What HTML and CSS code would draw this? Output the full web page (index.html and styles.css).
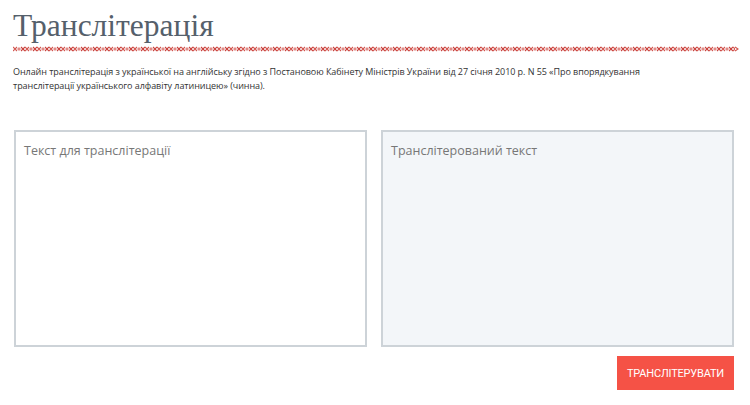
FILE: index.html
```html
<!DOCTYPE html>
<html lang="uk">
<head>
<meta charset="utf-8">
<title>Транслітерація</title>
<link rel="stylesheet" href="styles.css">
</head>
<body>
<main class="page">
  <h1 class="title">Транслітерація</h1>
  <svg class="ornament" width="726" height="6" viewBox="0 0 726 6" aria-hidden="true">
    <defs>
      <pattern id="stitch" x="0" y="0" width="12" height="6" patternUnits="userSpaceOnUse">
        <path d="M0 1 L4 5 M4 1 L0 5" stroke="#d2544e" stroke-width="1.1" fill="none"/>
        <path d="M4 3 L6 1 L8 3 L6 5 Z" fill="#e08a86"/>
        <path d="M8 1 L12 5 M12 1 L8 5" stroke="#c9403b" stroke-width="1.1" fill="none"/>
      </pattern>
    </defs>
    <rect x="0" y="0" width="722" height="6" fill="url(#stitch)"/>
    <path d="M722 1 L725 3 L722 5" stroke="#d2544e" stroke-width="1.1" fill="none"/>
  </svg>
  <p class="intro">Онлайн транслітерація з української на англійську згідно з Постановою Кабінету Міністрів України від 27 січня 2010 р. N 55 «Про впорядкування<br>транслітерації українського алфавіту латиницею» (чинна).</p>
  <div class="boxes">
    <textarea class="box" placeholder="Текст для транслітерації"></textarea>
    <textarea class="box box-out" placeholder="Транслітерований текст" readonly></textarea>
  </div>
  <div class="actions">
    <button class="btn" type="button">Транслітерувати</button>
  </div>
</main>
</body>
</html>
```

FILE: styles.css
```css
* { box-sizing: border-box; }
html, body { margin: 0; padding: 0; background: #fff; }
body { font-family: "Open Sans", "Noto Sans", sans-serif; color: #333; }

.page {
  width: 750px;
  padding: 8px 16px 0 13px;
}

.title {
  margin: 0;
  font-family: "Liberation Serif", "DejaVu Serif", serif;
  font-weight: 400;
  font-size: 31.5px;
  line-height: 36px;
  color: #55606b;
}

.ornament {
  display: block;
  margin-top: 2px;
}

.intro {
  margin: 13px 0 0;
  font-size: 9px;
  line-height: 14px;
  letter-spacing: -0.06px;
  color: #333;
  white-space: nowrap;
}

.boxes {
  display: grid;
  grid-template-columns: 353px 353px;
  column-gap: 14px;
  margin-top: 37px;
  margin-left: 1px;
}

.box {
  display: block;
  width: 353px;
  height: 217px;
  border: 2px solid #cdd3d8;
  border-radius: 0;
  background: #fff;
  padding: 10px 8px;
  font-family: "Open Sans", "Noto Sans", sans-serif;
  font-size: 12.5px;
  color: #333;
  resize: none;
  outline: none;
}
.box::placeholder { color: #777; opacity: 1; }
.box-out { background: #f3f6f9; }

.actions {
  display: flex;
  justify-content: flex-end;
  margin-top: 9px;
}

.btn {
  width: 117px;
  height: 34px;
  border: 0;
  background: #f55246;
  color: #fff;
  font-family: "Roboto", "Open Sans", sans-serif;
  font-size: 11px;
  text-transform: uppercase;
  letter-spacing: -0.2px;
  cursor: pointer;
}
```
